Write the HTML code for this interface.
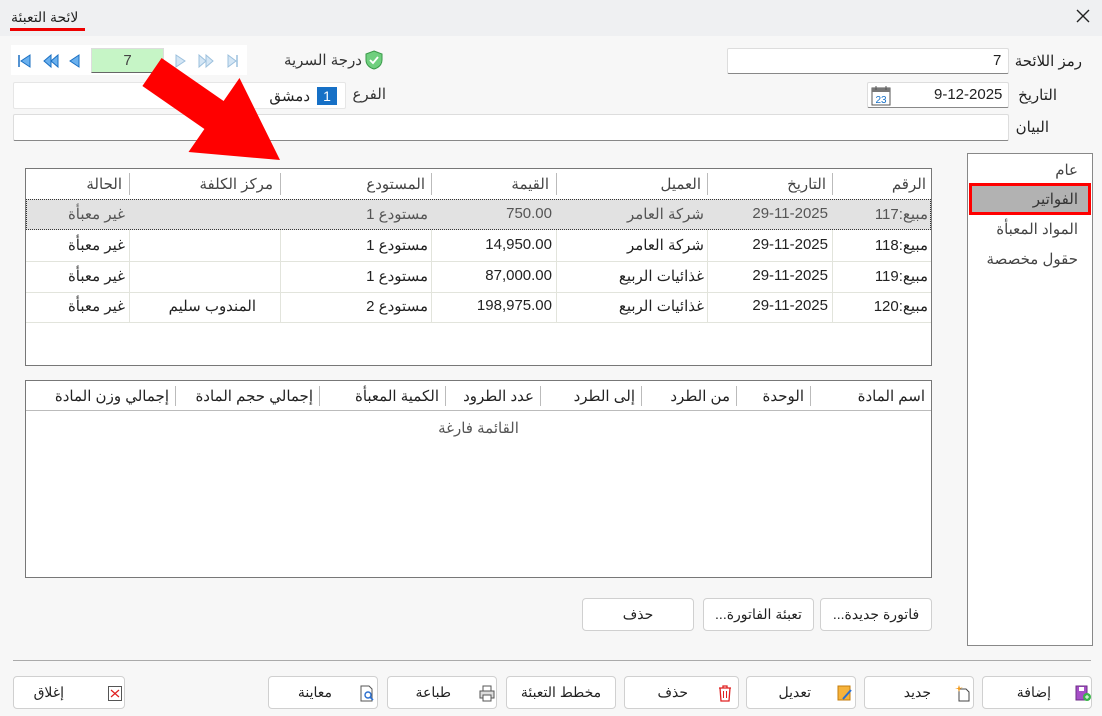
<!DOCTYPE html>
<html><head><meta charset="utf-8"><style>
*{margin:0;padding:0;box-sizing:border-box}
body{width:1102px;height:716px;background:#f7f7f7;font-family:"Liberation Sans","Noto Sans CJK SC",sans-serif;font-size:14px;color:#222;position:relative;overflow:hidden}
.a{position:absolute}
.t{direction:rtl;white-space:nowrap}
.inp{position:absolute;background:#fff;border:1px solid #ddd;border-bottom:1px solid #888;border-radius:2px}
.btn{position:absolute;background:#fff;border:1px solid #d0d0d0;border-radius:4px;height:33px;font-size:14px}
.grid{position:absolute;background:#fff;border:1px solid #777}
.cell{position:absolute;direction:rtl;white-space:nowrap;font-size:15px}
.num{position:absolute;direction:ltr;white-space:nowrap;font-size:15px;text-align:right}
.vs{position:absolute;width:1px;background:#bbb}
.vl{position:absolute;width:1px;background:#e2e4dc}
.hl{position:absolute;height:1px;background:#e2e4dc}
</style></head><body>
<div class="a" style="left:0;top:0;width:1102px;height:36px;background:#eff0f2"></div>
<div class="a t" style="left:11px;top:9px;font-size:14px">لائحة التعبئة</div>
<div class="a" style="left:10px;top:28px;width:75px;height:3px;background:#e00"></div>
<svg class="a" style="left:1076px;top:9px" width="14" height="14"><path d="M1 1L13 13M13 1L1 13" stroke="#222" stroke-width="1.4"/></svg>

<div class="a" style="left:11px;top:45px;width:236px;height:30px;background:#fff"></div>
<svg class="a" style="left:18px;top:53px" width="220" height="16">
<path d="M1 2V14" stroke="#1a6fc2" stroke-width="1.5"/><path d="M12 2L3 8L12 14Z" fill="#6ab0ee" stroke="#1a6fc2"/>
<path d="M33 2L26 8L33 14ZM40 2L33 8L40 14Z" fill="#6ab0ee" stroke="#1a6fc2"/>
<path d="M61 2L52 8L61 14Z" fill="#6ab0ee" stroke="#1a6fc2"/>
<path d="M158 2L167 8L158 14Z" fill="#d4e6f5" stroke="#9cc0dd"/>
<path d="M181 2L188 8L181 14ZM188 2L195 8L188 14Z" fill="#d4e6f5" stroke="#9cc0dd"/>
<path d="M210 2L218 8L210 14Z" fill="#d4e6f5" stroke="#9cc0dd"/><path d="M219 2V14" stroke="#9cc0dd" stroke-width="1.5"/>
</svg>
<div class="a" style="left:91px;top:48px;width:73px;height:25px;background:#c6f5c6;border:1px solid #ddd;border-bottom:1px solid #666;text-align:center;line-height:23px;color:#444;font-size:15px">7</div>

<svg class="a" style="left:365px;top:50px" width="18" height="20"><path d="M9 1L17 4V10C17 15 13 18 9 19C5 18 1 15 1 10V4Z" fill="#6fcf7e" stroke="#3a9a4a"/><path d="M5 10L8 13L13 7" stroke="#fff" stroke-width="1.8" fill="none"/></svg>
<div class="a t" style="right:740px;top:51px;font-size:15px;color:#333">درجة السرية</div>

<div class="inp" style="left:13px;top:82px;width:333px;height:27px;border:1px solid #e6e6e6"></div>
<div class="a" style="left:317px;top:87px;width:20px;height:18px;background:#1670c6;color:#fff;text-align:center;line-height:18px;font-size:14px">1</div>
<div class="a t" style="right:792px;top:87px;font-size:15px">دمشق</div>
<div class="a t" style="right:716px;top:85px;color:#333;font-size:15px">الفرع</div>

<div class="inp" style="left:727px;top:48px;width:282px;height:26px"></div>
<div class="a" style="left:993px;top:52px;font-size:15px">7</div>
<div class="a t" style="right:20px;top:52px;font-size:15px">رمز اللائحة</div>
<div class="inp" style="left:867px;top:82px;width:142px;height:26px"></div>
<svg class="a" style="left:871px;top:85px" width="20" height="21"><rect x="1" y="3" width="18" height="17" fill="#fff" stroke="#555"/><rect x="1" y="3" width="18" height="4" fill="#777"/><path d="M5 1V5M15 1V5" stroke="#555"/><text x="10" y="18" font-size="10" text-anchor="middle" fill="#1670c6" font-family="Liberation Sans">23</text></svg>
<div class="a" style="left:934px;top:86px;font-size:15px">9-12-2025</div>
<div class="a t" style="right:45px;top:86px;font-size:15px">التاريخ</div>
<div class="inp" style="left:13px;top:114px;width:996px;height:27px"></div>
<div class="a t" style="right:53px;top:118px;font-size:15px">البيان</div>

<div class="grid" style="left:25px;top:168px;width:907px;height:198px"></div>
<div class="a" style="left:26px;top:199px;width:905px;height:31px;background:#e2e2e2;border:1px dotted #333"></div>
<div class="vs" style="left:832px;top:173px;height:22px"></div>
<div class="vs" style="left:707px;top:173px;height:22px"></div>
<div class="vs" style="left:556px;top:173px;height:22px"></div>
<div class="vs" style="left:431px;top:173px;height:22px"></div>
<div class="vs" style="left:280px;top:173px;height:22px"></div>
<div class="vs" style="left:129px;top:173px;height:22px"></div>
<div class="vl" style="left:832px;top:230px;height:92px"></div><div class="vl" style="left:707px;top:230px;height:92px"></div><div class="vl" style="left:556px;top:230px;height:92px"></div><div class="vl" style="left:431px;top:230px;height:92px"></div><div class="vl" style="left:280px;top:230px;height:92px"></div><div class="vl" style="left:129px;top:230px;height:92px"></div>
<div class="hl" style="left:26px;top:261px;width:905px"></div><div class="hl" style="left:26px;top:292px;width:905px"></div><div class="hl" style="left:26px;top:322px;width:905px"></div>
<div class="cell" style="right:176px;top:175px;color:#444">الرقم</div>
<div class="cell" style="right:276px;top:175px;color:#444">التاريخ</div>
<div class="cell" style="right:401px;top:175px;color:#444">العميل</div>
<div class="cell" style="right:553px;top:175px;color:#444">القيمة</div>
<div class="cell" style="right:677px;top:175px;color:#444">المستودع</div>
<div class="cell" style="right:829px;top:175px;color:#444">مركز الكلفة</div>
<div class="cell" style="right:980px;top:175px;color:#444">الحالة</div>
<div style="color:#555">
<div class="cell" style="right:174px;top:205px">مبيع:117</div><div class="num" style="right:274px;top:205px">29-11-2025</div><div class="cell" style="right:398px;top:205px">شركة العامر</div><div class="num" style="right:550px;top:205px">750.00</div><div class="cell" style="right:674px;top:205px">مستودع 1</div><div class="cell" style="right:977px;top:205px">غير معبأة</div>
</div>
<div class="cell" style="right:174px;top:236px">مبيع:118</div><div class="num" style="right:274px;top:236px">29-11-2025</div><div class="cell" style="right:398px;top:236px">شركة العامر</div><div class="num" style="right:550px;top:236px">14,950.00</div><div class="cell" style="right:674px;top:236px">مستودع 1</div><div class="cell" style="right:977px;top:236px">غير معبأة</div>
<div class="cell" style="right:174px;top:267px">مبيع:119</div><div class="num" style="right:274px;top:267px">29-11-2025</div><div class="cell" style="right:398px;top:267px">غذائيات الربيع</div><div class="num" style="right:550px;top:267px">87,000.00</div><div class="cell" style="right:674px;top:267px">مستودع 1</div><div class="cell" style="right:977px;top:267px">غير معبأة</div>
<div class="cell" style="right:174px;top:297px">مبيع:120</div><div class="num" style="right:274px;top:297px">29-11-2025</div><div class="cell" style="right:398px;top:297px">غذائيات الربيع</div><div class="num" style="right:550px;top:297px">198,975.00</div><div class="cell" style="right:674px;top:297px">مستودع 2</div><div class="cell" style="right:846px;top:297px">المندوب سليم</div><div class="cell" style="right:977px;top:297px">غير معبأة</div>

<div class="grid" style="left:25px;top:380px;width:907px;height:198px"></div>
<div class="a" style="left:26px;top:410px;width:905px;height:1px;background:#bbb"></div>
<div class="vs" style="left:810px;top:386px;height:20px"></div><div class="vs" style="left:736px;top:386px;height:20px"></div><div class="vs" style="left:641px;top:386px;height:20px"></div><div class="vs" style="left:540px;top:386px;height:20px"></div><div class="vs" style="left:445px;top:386px;height:20px"></div><div class="vs" style="left:319px;top:386px;height:20px"></div><div class="vs" style="left:175px;top:386px;height:20px"></div>
<div class="cell" style="right:177px;top:387px">اسم المادة</div>
<div class="cell" style="right:298px;top:387px">الوحدة</div>
<div class="cell" style="right:372px;top:387px">من الطرد</div>
<div class="cell" style="right:467px;top:387px">إلى الطرد</div>
<div class="cell" style="right:568px;top:387px">عدد الطرود</div>
<div class="cell" style="right:663px;top:387px">الكمية المعبأة</div>
<div class="cell" style="right:789px;top:387px">إجمالي حجم المادة</div>
<div class="cell" style="right:933px;top:387px">إجمالي وزن المادة</div>
<div class="cell" style="left:0;width:957px;text-align:center;top:419px;color:#555">القائمة فارغة</div>

<div class="a" style="left:967px;top:153px;width:126px;height:493px;background:#fff;border:1px solid #888"></div>
<div class="a t" style="right:24px;top:161px;color:#444;font-size:15px">عام</div>
<div class="a" style="left:969px;top:183px;width:122px;height:32px;background:#b2b2b2;border:3px solid #f00"></div>
<div class="a t" style="right:24px;top:190px;color:#333;font-size:15px">الفواتير</div>
<div class="a t" style="right:24px;top:220px;color:#444;font-size:15px">المواد المعبأة</div>
<div class="a t" style="right:24px;top:250px;color:#444;font-size:15px">حقول مخصصة</div>

<div class="btn" style="left:820px;top:598px;width:112px"><div class="t" style="text-align:center;line-height:31px">فاتورة جديدة...</div></div>
<div class="btn" style="left:703px;top:598px;width:111px"><div class="t" style="text-align:center;line-height:31px">تعبئة الفاتورة...</div></div>
<div class="btn" style="left:582px;top:598px;width:112px"><div class="t" style="text-align:center;line-height:31px">حذف</div></div>

<div class="a" style="left:13px;top:660px;width:1078px;height:1px;background:#aaa"></div>

<div class="btn" style="left:982px;top:676px;width:110px"><div class="t a" style="right:40px;top:7px">إضافة</div>
<svg class="a" style="left:92px;top:8px" width="16" height="17"><rect x="1" y="1" width="11" height="14" fill="#a64fc7" stroke="#6b2c86"/><rect x="4" y="2" width="5" height="4" fill="#fff"/><circle cx="12" cy="12" r="4" fill="#3bb54a"/><path d="M12 10V14M10 12H14" stroke="#fff"/></svg></div>
<div class="btn" style="left:864px;top:676px;width:110px"><div class="t a" style="right:42px;top:7px">جديد</div>
<svg class="a" style="left:90px;top:7px" width="16" height="18"><path d="M4 5H11L14 8V17H4Z" fill="#fff" stroke="#444"/><path d="M4 1L5 4L8 3L5 5L4 8L3 5L0 4L3 4Z" fill="#f29b1d"/></svg></div>
<div class="btn" style="left:746px;top:676px;width:110px"><div class="t a" style="right:44px;top:7px">تعديل</div>
<svg class="a" style="left:90px;top:8px" width="16" height="17"><rect x="1" y="1" width="12" height="14" fill="#f6b33b" stroke="#c47d0d"/><path d="M6 14L14 5" stroke="#2a6fd0" stroke-width="2"/></svg></div>
<div class="btn" style="left:624px;top:676px;width:115px"><div class="t a" style="right:50px;top:7px">حذف</div>
<svg class="a" style="left:93px;top:8px" width="14" height="17"><path d="M1 3H13M5 3V1H9V3M2 3L3 16H11L12 3" fill="none" stroke="#e02020" stroke-width="1.3"/><path d="M5.5 6V13M8.5 6V13" stroke="#e02020"/></svg></div>
<div class="btn" style="left:506px;top:676px;width:110px"><div class="t" style="text-align:center;line-height:31px">مخطط التعبئة</div></div>
<div class="btn" style="left:387px;top:676px;width:110px"><div class="t a" style="right:45px;top:7px">طباعة</div>
<svg class="a" style="left:91px;top:8px" width="16" height="17"><rect x="4" y="1" width="8" height="5" fill="#fff" stroke="#555"/><rect x="1" y="6" width="14" height="7" fill="#ddd" stroke="#555"/><rect x="4" y="10" width="8" height="6" fill="#fff" stroke="#555"/></svg></div>
<div class="btn" style="left:268px;top:676px;width:110px"><div class="t a" style="right:45px;top:7px">معاينة</div>
<svg class="a" style="left:91px;top:8px" width="16" height="17"><path d="M1 1H9L12 4V16H1Z" fill="#fff" stroke="#555"/><circle cx="8" cy="10" r="3" fill="none" stroke="#2a6fd0" stroke-width="1.4"/><path d="M10 12L13 15" stroke="#2a6fd0" stroke-width="1.6"/></svg></div>
<div class="btn" style="left:13px;top:676px;width:112px"><div class="t a" style="right:60px;top:7px">إغلاق</div>
<svg class="a" style="left:94px;top:9px" width="14" height="15"><rect x="0.5" y="0.5" width="13" height="14" fill="#fff" stroke="#555"/><path d="M3 4L11 11M11 4L3 11" stroke="#e02020" stroke-width="1.2"/></svg></div>

<svg class="a" style="left:0;top:0" width="400" height="200"><polygon points="161.6,58 223.6,101 239.5,78 280,160 188.5,152 204.4,129 142.4,86" fill="#ff0000"/></svg>
</body></html>
